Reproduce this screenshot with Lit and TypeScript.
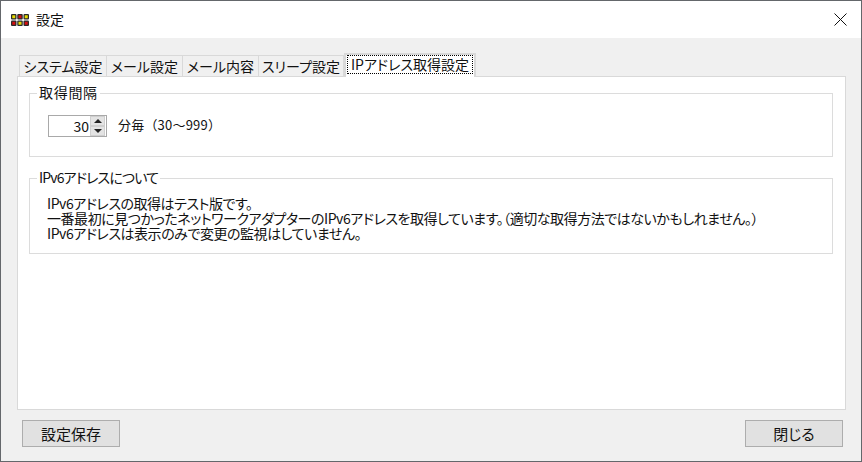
import { LitElement, html, css } from "lit";
import { customElement } from "lit/decorators.js";

const tabs = ["システム設定", "メール設定", "メール内容", "スリープ設定"];
const tabWidths = [88, 76, 76, 85];

@customElement("app-root")
export class AppRoot extends LitElement {
  static styles = css`
    :host { display: block; width: 862px; height: 462px; font-family: "Noto Sans CJK JP", sans-serif; font-size: 14px; font-feature-settings: "palt"; color: #111; }
    * { box-sizing: border-box; }
    .win { width: 862px; height: 462px; border: 1px solid #64676b; background: #f0f0f0; display: flex; flex-direction: column; }
    .title { height: 37px; background: #fff; display: flex; align-items: center; padding: 0 14px 0 10px; gap: 7px; flex: none; }
    .title .name { flex: 1; font-size: 14px; line-height: 37px; }
    .body { flex: 1; display: flex; flex-direction: column; padding: 15px 16px 0 16px; }
    .tabs { display: flex; height: 23px; padding-left: 2px; flex: none; position: relative; z-index: 1; }
    .tab { height: 21px; margin-top: 2px; border: 1px solid #d9d9d9; border-bottom: none; border-left: none; background: #f0f0f0; line-height: 20px; text-align: center; white-space: nowrap; }
    .tab:first-child { border-left: 1px solid #d9d9d9; }
    .tab.active { height: 24px; margin-top: 0; background: #fff; border: 2px solid #d9d9d9; border-bottom: none; padding: 0 1px; }
    .tab.active span { display: block; height: 19px; line-height: 18px; outline: 1px dotted #000; outline-offset: -1px; text-align: center; }
    .panel { height: 334px; width: 829px; background: #fff; border: 1px solid #d9d9d9; padding: 16px 12px 0 11px; flex: none; }
    .group { position: relative; border: 1px solid #dcdcdc; width: 804px; }
    .g1 { height: 64px; margin-bottom: 21px; padding: 21px 0 0 18px; display: flex; align-items: flex-start; }
    .g2 { height: 76px; padding: 17px 0 0 17px; }
    .legend { position: absolute; left: 7px; top: -10px; background: #fff; padding: 0 2px; line-height: 17px; white-space: nowrap; }
    .l1 { letter-spacing: 0.7px; }
    .l2 { letter-spacing: -0.85px; }
    .spin { width: 59px; height: 22px; border: 1px solid #a9a9a9; display: flex; background: #fff; flex: none; }
    .val { flex: 1; text-align: right; line-height: 20px; padding-right: 1px; }
    .arrows { width: 16px; display: flex; flex-direction: column; flex: none; padding: 0 1px 0 0; }
    .arrows div { flex: 1; background: #e3e3e3; border: 1px solid #cfcfcf; display: flex; align-items: center; justify-content: center; }
    .unit { margin-left: 11px; line-height: 20px; white-space: nowrap; font-size: 13px; font-feature-settings: normal; letter-spacing: 0.2px; }
    .note { line-height: 15px; white-space: nowrap; letter-spacing: -0.45px; }
    .foot { display: flex; justify-content: space-between; padding: 10px 2px 0 5px; }
    button { width: 98px; height: 27px; background: #e1e1e1; border: 1px solid #adadad; font: inherit; font-size: 15px; color: #111; padding: 0; border-radius: 0; }
    .d { fill: #2a2a2a; }
    .y { fill: #e6dc00; }
    .r { fill: #d40f0f; }
  `;

  render() {
    return html`<div class="win">
      <div class="title">
        <svg width="18" height="12" viewBox="0 0 18 12">
          <rect class="d" x="0" y="0" width="5.5" height="5.5" rx="1" />
          <rect class="d" x="6.25" y="0" width="5.5" height="5.5" rx="1" />
          <rect class="d" x="12.5" y="0" width="5.5" height="5.5" rx="1" />
          <rect class="d" x="0" y="6.5" width="5.5" height="5.5" rx="1" />
          <rect class="d" x="6.25" y="6.5" width="5.5" height="5.5" rx="1" />
          <rect class="d" x="12.5" y="6.5" width="5.5" height="5.5" rx="1" />
          <rect class="y" x="1.25" y="1.25" width="3" height="3" />
          <rect class="r" x="7.5" y="1.25" width="3" height="3" />
          <rect class="y" x="13.75" y="1.25" width="3" height="3" />
          <rect class="r" x="1.25" y="7.75" width="3" height="3" />
          <rect class="y" x="7.5" y="7.75" width="3" height="3" />
          <rect class="r" x="13.75" y="7.75" width="3" height="3" />
        </svg>
        <span class="name">設定</span>
        <svg width="13" height="13" viewBox="0 0 13 13"><path d="M.5.5l12 12M12.5.5l-12 12" stroke="#111" fill="none" /></svg>
      </div>
      <div class="body">
        <div class="tabs">
          ${tabs.map((t, i) => html`<div class="tab" style="width:${tabWidths[i]}px">${t}</div>`)}
          <div class="tab active" style="width:132px"><span>IPアドレス取得設定</span></div>
        </div>
        <div class="panel">
          <div class="group g1">
            <div class="legend l1">取得間隔</div>
            <div class="spin">
              <div class="val">30</div>
              <div class="arrows">
                <div><svg width="8" height="4" viewBox="0 0 8 4"><path d="M4 0l4 4H0z" fill="#222" /></svg></div>
                <div><svg width="8" height="4" viewBox="0 0 8 4"><path d="M0 0h8L4 4z" fill="#222" /></svg></div>
              </div>
            </div>
            <div class="unit">分毎（30～999）</div>
          </div>
          <div class="group g2">
            <div class="legend l2">IPv6アドレスについて</div>
            <div class="note">IPv6アドレスの取得はテスト版です。</div>
            <div class="note">一番最初に見つかったネットワークアダプターのIPv6アドレスを取得しています。（適切な取得方法ではないかもしれません。）</div>
            <div class="note">IPv6アドレスは表示のみで変更の監視はしていません。</div>
          </div>
        </div>
        <div class="foot"><button>設定保存</button><button>閉じる</button></div>
      </div>
    </div>`;
  }
}
